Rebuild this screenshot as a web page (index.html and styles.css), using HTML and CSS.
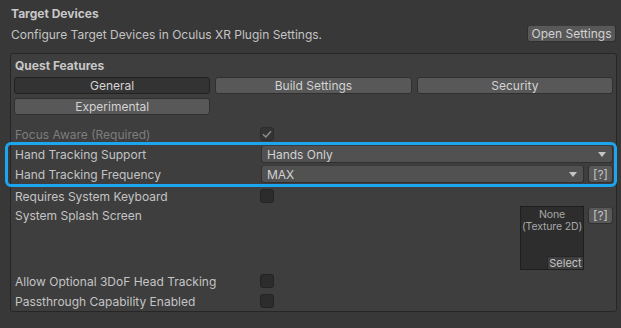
FILE: index.html
```html
<!DOCTYPE html>
<html>
<head>
<meta charset="utf-8">
<link rel="stylesheet" href="styles.css">
</head>
<body>
<div class="page">
  <div class="header">
    <div class="title">Target Devices</div>
    <div class="desc-row">
      <span class="desc">Configure Target Devices in Oculus XR Plugin Settings.</span>
      <button class="btn open-btn">Open Settings</button>
    </div>
  </div>
  <div class="box">
    <div class="box-title">Quest Features</div>
    <div class="tabs">
      <div class="tab selected">General</div>
      <div class="tab">Build Settings</div>
      <div class="tab">Security</div>
      <div class="tab">Experimental</div>
    </div>
    <div class="rows">
      <div class="row">
        <span class="label disabled">Focus Aware (Required)</span>
        <span class="check checked"><svg width="10" height="8" viewBox="0 0 10 8"><path d="M1 4.2 L3.8 7 L9 1.2" fill="none" stroke="#8c8c8c" stroke-width="1.5"/></svg></span>
      </div>
      <div class="highlight">
        <div class="row">
          <span class="label">Hand Tracking Support</span>
          <div class="dropdown"><span>Hands Only</span><span class="arrow"></span></div>
        </div>
        <div class="row">
          <span class="label">Hand Tracking Frequency</span>
          <div class="dropdown"><span>MAX</span><span class="arrow"></span></div>
          <button class="btn help">[?]</button>
        </div>
      </div>
      <div class="row">
        <span class="label">Requires System Keyboard</span>
        <span class="check"></span>
      </div>
      <div class="row splash">
        <span class="label">System Splash Screen</span>
        <div class="spacer"></div>
        <div class="texture">
          <div class="tex-text">None<br>(Texture 2D)</div>
          <div class="tex-select">Select</div>
        </div>
        <button class="btn help">[?]</button>
      </div>
      <div class="row">
        <span class="label">Allow Optional 3DoF Head Tracking</span>
        <span class="check"></span>
      </div>
      <div class="row">
        <span class="label">Passthrough Capability Enabled</span>
        <span class="check"></span>
      </div>
    </div>
  </div>
</div>
</body>
</html>
```

FILE: styles.css
```css
* { box-sizing: border-box; }
html, body {
  margin: 0;
  padding: 0;
  background: #383838;
  width: 621px;
  height: 328px;
  overflow: hidden;
}
body {
  font-family: Inter, "Noto Sans", sans-serif;
  font-size: 12px;
  color: #c4c4c4;
}
.page {
  padding: 5px 4px 0 10px;
}
.header {
  padding-left: 1px;
}
.title {
  font-weight: 700;
  height: 18px;
  line-height: 18px;
  color: #c8c8c8;
}
.desc-row {
  display: flex;
  align-items: center;
  justify-content: space-between;
  height: 20px;
  margin-top: 1px;
}
.desc { color: #c4c4c4; }
.btn {
  font-family: inherit;
  font-size: 12px;
  color: #d2d2d2;
  background: #585858;
  border: 1px solid #303030;
  border-top-color: #3a3a3a;
  border-radius: 3px;
  padding: 0;
  height: 17px;
  line-height: 15px;
  margin: 0;
}
.open-btn {
  width: 89px;
  margin-right: 1px;
  margin-top: -1px;
}
.box {
  margin-top: 9px;
  border: 1px solid #262626;
  border-radius: 3px;
  background: #3e3e3e;
  padding: 3px 3px 0 3px;
  height: 259px;
}
.box-title {
  font-weight: 700;
  height: 18px;
  line-height: 18px;
  padding-left: 1px;
  color: #c8c8c8;
}
.tabs {
  display: grid;
  grid-template-columns: 1fr 1fr 1fr;
  column-gap: 5px;
  row-gap: 4px;
  margin-top: 2px;
}
.tab {
  height: 17px;
  line-height: 15px;
  text-align: center;
  background: #585858;
  border: 1px solid #303030;
  border-radius: 3px;
  color: #d2d2d2;
}
.tab.selected {
  background: #333333;
  border-color: #222222;
  color: #d6d6d6;
}
.rows {
  margin-top: 9px;
  padding-left: 1px;
}
.row {
  display: flex;
  align-items: center;
  height: 20px;
}
.label {
  width: 246px;
  flex: none;
}
.label.disabled { color: #7d7d7d; }
.check {
  width: 14px;
  height: 14px;
  border: 1px solid #232323;
  border-radius: 3px;
  background: #2c2c2c;
  margin-left: -1px;
  display: flex;
  align-items: center;
  justify-content: center;
}
.check.checked {
  background: #343434;
  border-color: #2c2c2c;
}
.highlight {
  position: relative;
  margin-bottom: 2px;
}
.highlight::before {
  content: "";
  position: absolute;
  top: -2px;
  bottom: -3px;
  left: -10px;
  right: -4px;
  border: 3px solid #1ca6ef;
  border-radius: 6px;
  pointer-events: none;
}
.dropdown {
  flex: 1;
  height: 18px;
  background: #515151;
  border: 1px solid #303030;
  border-top-color: #3a3a3a;
  border-radius: 3px;
  display: flex;
  align-items: center;
  justify-content: space-between;
  padding: 0 6px 0 5px;
  color: #d2d2d2;
}
.arrow {
  width: 0;
  height: 0;
  border-left: 4px solid transparent;
  border-right: 4px solid transparent;
  border-top: 5px solid #c4c4c4;
}
.help {
  width: 25px;
  height: 18px;
  margin-left: 4px;
  flex: none;
  color: #c4c4c4;
}
.splash {
  height: 65px;
  align-items: flex-start;
  line-height: 20px;
}
.spacer { flex: 1; }
.texture {
  width: 64px;
  height: 64px;
  background: #2d2d2d;
  border: 1px solid #1f1f1f;
  display: flex;
  flex-direction: column;
  align-items: center;
  justify-content: space-between;
  overflow: hidden;
}
.tex-text {
  font-size: 10.5px;
  line-height: 12px;
  letter-spacing: -0.15px;
  color: #a8a8a8;
  text-align: center;
  margin-top: 2px;
  white-space: nowrap;
}
.tex-select {
  align-self: flex-end;
  width: 36px;
  height: 13px;
  line-height: 12px;
  font-size: 11px;
  text-align: center;
  background: #3f3f3f;
  border: 1px solid #262626;
  border-right: none;
  border-bottom: none;
  color: #c4c4c4;
}
.splash .help {
  margin-top: 1px;
  height: 17px;
}
```
